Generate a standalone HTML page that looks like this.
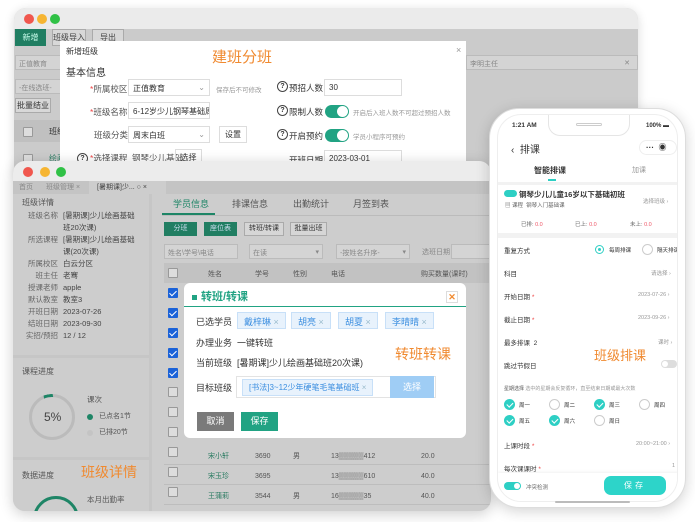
<!DOCTYPE html><html><head><meta charset="utf-8"><style>
*{box-sizing:border-box;margin:0;padding:0}
body{width:695px;height:522px;background:#fff;position:relative;overflow:hidden;font-family:"Liberation Sans","Noto Sans CJK SC",sans-serif;font-size:8px;color:#333}
.a{position:absolute}
.dot{position:absolute;width:10px;height:10px;border-radius:50%}
.r{background:#f0574e}.y{background:#f6b532}.g{background:#30c146}
.t{position:absolute;white-space:nowrap}
.inp{position:absolute;border:1px solid #ddd;background:#fff;height:17px;font-size:8px;padding:3px 4px;white-space:nowrap;overflow:hidden}
.gin{position:absolute;border:1px solid #bbb;background:#d4d4d4;height:15px;font-size:7px;color:#888;padding:3px;white-space:nowrap}
.tog{position:absolute;width:24px;height:13px;border-radius:7px;background:#21a383}
.tog:after{content:"";position:absolute;right:1px;top:1px;width:11px;height:11px;border-radius:50%;background:#fff}
.q{position:absolute;width:11px;height:11px;border:1.3px solid #444;border-radius:50%;font-size:7px;text-align:center;line-height:9px;font-weight:bold}
.cb{position:absolute;width:10px;height:10px;border:1px solid #999;background:#ddd;border-radius:1px}
.cbc{background:#1b62d8;border-color:#1b62d8}
.cbc:after{content:"";position:absolute;left:2px;top:0px;width:3px;height:6px;border:solid #fff;border-width:0 1.5px 1.5px 0;transform:rotate(45deg)}
.tag{position:absolute;background:#e8f2fc;border:1px solid #c8e0f8;color:#3d8fe0;height:17px;font-size:9px;padding:2px 6px;white-space:nowrap}
.pc{position:absolute;width:11px;height:11px;border-radius:50%;background:#2dcfc4}
.pc:after{content:"";position:absolute;left:3.5px;top:1.5px;width:2.5px;height:5px;border:solid #fff;border-width:0 1.2px 1.2px 0;transform:rotate(45deg)}
.po{position:absolute;width:11px;height:11px;border-radius:50%;border:1px solid #ccc;background:#fff}
</style></head><body>

<!-- Window 1 -->
<div class="a" style="left:14px;top:8px;width:624px;height:170px;border-radius:12px;background:#cbcbcb;overflow:hidden;box-shadow:0 2px 10px rgba(0,0,0,.15)">
 <div class="a" style="left:0;top:0;width:100%;height:21px;background:#ebebeb"></div>
 <div class="dot r" style="left:10px;top:6px"></div><div class="dot y" style="left:23px;top:6px"></div><div class="dot g" style="left:36px;top:6px"></div>
 <div class="a" style="left:1px;top:21px;width:31px;height:17px;background:#207e62;color:#cfe;font-size:8px;text-align:center;line-height:17px">新增</div>
 <div class="a" style="left:38px;top:21px;width:34px;height:17px;border:1px solid #aaa;background:#d8d8d8;font-size:8px;text-align:center;line-height:15px;color:#444">班级导入</div>
 <div class="a" style="left:78px;top:21px;width:32px;height:17px;border:1px solid #aaa;background:#d8d8d8;font-size:8px;text-align:center;line-height:15px;color:#444">导出</div>
 <div class="gin" style="left:1px;top:47px;width:48px">正值教育</div>
 <div class="gin" style="left:1px;top:71px;width:48px">-在线选班-</div>
 <div class="a" style="left:1px;top:90px;width:36px;height:15px;border:1px solid #aaa;background:#d8d8d8;font-size:8px;text-align:center;line-height:13px">批量结业</div>
 <div class="a" style="left:0;top:112px;width:50px;height:22px;background:#c0c0c0"></div>
 <div class="cb" style="left:9px;top:119px"></div><div class="t" style="left:35px;top:118px;font-size:8px">班级名</div>
 <div class="cb" style="left:9px;top:146px"></div><div class="t" style="left:35px;top:145px;font-size:8px;color:#287a60">绘画初</div>
 <div class="gin" style="left:452px;top:47px;width:172px">李明主任<span style="float:right;margin-right:4px">✕</span></div>
</div>
<!-- modal 1 -->
<div class="a" style="left:60px;top:41px;width:406px;height:130px;background:#fff">
 <div class="t" style="left:6px;top:5px;font-size:8px">新增班级</div>
 <div class="t" style="left:152px;top:5px;font-size:15px;color:#f08a30">建班分班</div>
 <div class="t" style="left:396px;top:4px;font-size:9px;color:#999">×</div>
 <div class="t" style="left:6px;top:23px;font-size:10px">基本信息</div>
 <div class="t" style="left:30px;top:42px;font-size:8.5px;color:#555"><span style="color:#e44">*</span>所属校区</div>
 <div class="inp" style="left:68px;top:38px;width:82px">正值教育<span style="float:right;color:#999">⌄</span></div>
 <div class="t" style="left:156px;top:43px;font-size:6.5px;color:#999">保存后不可修改</div>
 <div class="t" style="left:30px;top:65px;font-size:8.5px;color:#555"><span style="color:#e44">*</span>班级名称</div>
 <div class="inp" style="left:68px;top:61px;width:82px">6-12岁少儿钢琴基础周末班</div>
 <div class="t" style="left:34px;top:88px;font-size:8.5px;color:#555">班级分类</div>
 <div class="inp" style="left:68px;top:85px;width:82px">周末白班<span style="float:right;color:#999">⌄</span></div>
 <div class="a" style="left:159px;top:85px;width:28px;height:17px;border:1px solid #ddd;font-size:8px;text-align:center;line-height:15px">设置</div>
 <div class="q" style="left:17px;top:112px">?</div>
 <div class="t" style="left:30px;top:111px;font-size:8.5px;color:#555"><span style="color:#e44">*</span>选择课程 &nbsp;钢琴少儿基础</div>
 <div class="a" style="left:115px;top:108px;width:27px;height:17px;border:1px solid #ddd;font-size:8px;text-align:center;line-height:15px">选择</div>
 <div class="q" style="left:217px;top:40px">?</div><div class="t" style="left:229px;top:41px;font-size:8.5px">预招人数</div>
 <div class="inp" style="left:264px;top:38px;width:78px">30</div>
 <div class="q" style="left:217px;top:64px">?</div><div class="t" style="left:229px;top:65px;font-size:8.5px">限制人数</div>
 <div class="tog" style="left:265px;top:64px"></div>
 <div class="t" style="left:293px;top:66px;font-size:6.5px;color:#999">开启后入班人数不可超过预招人数</div>
 <div class="q" style="left:217px;top:88px">?</div><div class="t" style="left:229px;top:89px;font-size:8.5px">开启预约</div>
 <div class="tog" style="left:265px;top:88px"></div>
 <div class="t" style="left:293px;top:90px;font-size:6.5px;color:#999">学员小程序可预约</div>
 <div class="t" style="left:229px;top:113px;font-size:8.5px">开班日期</div>
 <div class="inp" style="left:264px;top:109px;width:78px">2023-03-01</div>
</div>

<!-- Window 2 -->
<div class="a" style="left:13px;top:161px;width:478px;height:350px;border-radius:12px;background:#cdcdcd;overflow:hidden;box-shadow:0 3px 14px rgba(0,0,0,.2)">
 <div class="a" style="left:0;top:0;width:100%;height:20px;background:#ececec"></div>
 <div class="dot r" style="left:10px;top:6px"></div><div class="dot y" style="left:27px;top:6px"></div><div class="dot g" style="left:43px;top:6px"></div>
 <div class="a" style="left:0;top:20px;width:100%;height:13px;background:#c4c4c4"></div>
 <div class="t" style="left:6px;top:21px;font-size:7px;color:#888">首页</div>
 <div class="t" style="left:33px;top:21px;font-size:7px;color:#888">班级管理 ×</div>
 <div class="a" style="left:76px;top:20px;width:77px;height:13px;background:#cdcdcd"></div>
 <div class="t" style="left:84px;top:21px;font-size:7px;color:#444">[暑期课]少... ○ ×</div>
 <div class="a" style="left:0;top:33px;width:139px;height:320px;background:#cdcdcd;border-right:3px solid #c6c6c6"></div>
 <div class="t" style="left:9px;top:36px;font-size:8px;color:#555">班级详情</div>
 <div class="t" style="left:8px;top:49px;font-size:7.5px;line-height:12px;color:#666;text-align:right;width:37px">班级名称<br><br>所选课程<br><br>所属校区<br>班主任<br>授课老师<br>默认教室<br>开班日期<br>结班日期<br>实招/预招</div>
 <div class="t" style="left:50px;top:49px;font-size:7.5px;line-height:12px;color:#444">[暑期课]少儿绘画基础<br>班20次课)<br>[暑期课]少儿绘画基础<br>课(20次课)<br>白云分区<br>老骞<br>apple<br>教室3<br>2023-07-26<br>2023-09-30<br>12 / 12</div>
 <div class="a" style="left:0;top:194px;width:139px;height:3px;background:#c6c6c6"></div>
 <div class="t" style="left:9px;top:205px;font-size:8px;color:#555">课程进度</div>
 <div class="a" style="left:16px;top:233px;width:46px;height:46px;border-radius:50%;border:3px solid #bbb"></div>
 <div class="a" style="left:16px;top:233px;width:46px;height:46px;border-radius:50%;border:3px solid transparent;border-top-color:#1e8566;transform:rotate(-10deg);clip-path:polygon(40% 0,60% 0,60% 20%,40% 20%)"></div>
 <div class="t" style="left:31px;top:249px;font-size:12px;color:#444">5%</div>
 <div class="t" style="left:74px;top:233px;font-size:7.5px;color:#555">课次</div>
 <div class="a" style="left:74px;top:253px;width:6px;height:6px;border-radius:50%;background:#1e8566"></div>
 <div class="t" style="left:86px;top:250px;font-size:7px;color:#555">已点名1节</div>
 <div class="a" style="left:74px;top:269px;width:6px;height:6px;border-radius:50%;background:#c4c4c4"></div>
 <div class="t" style="left:86px;top:266px;font-size:7px;color:#555">已排20节</div>
 <div class="a" style="left:0;top:296px;width:139px;height:3px;background:#c6c6c6"></div>
 <div class="t" style="left:9px;top:309px;font-size:8px;color:#555">数据进度</div>
 <div class="t" style="left:68px;top:301px;font-size:14px;color:#f08a30">班级详情</div>
 <div class="t" style="left:74px;top:333px;font-size:7.5px;color:#555">本月出勤率</div>
 <div class="a" style="left:20px;top:335px;width:46px;height:46px;border-radius:50%;border:3px solid #1e8566"></div>
 <div class="t" style="left:160px;top:36px;font-size:9px;color:#1e8566">学员信息</div>
 <div class="a" style="left:149px;top:52px;width:53px;height:2px;background:#1e8566"></div>
 <div class="a" style="left:149px;top:54px;width:329px;height:1px;background:#bbb"></div>
 <div class="t" style="left:219px;top:36px;font-size:9px;color:#555">排课信息</div>
 <div class="t" style="left:280px;top:36px;font-size:9px;color:#555">出勤统计</div>
 <div class="t" style="left:340px;top:36px;font-size:9px;color:#555">月签到表</div>
 <div class="a" style="left:151px;top:61px;width:33px;height:14px;background:#217e62;color:#cde;font-size:7px;text-align:center;line-height:14px">分班</div>
 <div class="a" style="left:191px;top:61px;width:33px;height:14px;background:#217e62;color:#cde;font-size:7px;text-align:center;line-height:14px">座位表</div>
 <div class="a" style="left:231px;top:61px;width:40px;height:14px;border:1px solid #aaa;background:#d6d6d6;font-size:7px;text-align:center;line-height:12px">转班/转课</div>
 <div class="a" style="left:277px;top:61px;width:37px;height:14px;border:1px solid #aaa;background:#d6d6d6;font-size:7px;text-align:center;line-height:12px">批量出班</div>
 <div class="gin" style="left:151px;top:83px;width:74px">姓名\学号\电话</div>
 <div class="gin" style="left:236px;top:83px;width:74px">在读<span style="float:right">▾</span></div>
 <div class="gin" style="left:323px;top:83px;width:74px">-按姓名升序-<span style="float:right">▾</span></div>
 <div class="t" style="left:409px;top:86px;font-size:7px;color:#888">选班日期</div>
 <div class="gin" style="left:438px;top:83px;width:40px"></div>
 <div class="a" style="left:151px;top:102px;width:327px;height:20px;background:#c2c2c2"></div>
 <div class="cb" style="left:155px;top:107px"></div>
 <div class="t" style="left:195px;top:108px;font-size:7px;color:#555">姓名</div>
 <div class="t" style="left:242px;top:108px;font-size:7px;color:#555">学号</div>
 <div class="t" style="left:280px;top:108px;font-size:7px;color:#555">性别</div>
 <div class="t" style="left:318px;top:108px;font-size:7px;color:#555">电话</div>
 <div class="t" style="left:408px;top:108px;font-size:7px;color:#555">购买数量(课时)</div>
 <div class="cb cbc" style="left:155px;top:127px"></div>
 <div class="cb cbc" style="left:155px;top:147px"></div>
 <div class="cb cbc" style="left:155px;top:167px"></div>
 <div class="cb cbc" style="left:155px;top:187px"></div>
 <div class="cb cbc" style="left:155px;top:207px"></div>
 <div class="cb" style="left:155px;top:226px"></div>
 <div class="cb" style="left:155px;top:246px"></div>
 <div class="cb" style="left:155px;top:266px"></div>
 <div class="cb" style="left:155px;top:286px"></div>
 <div class="cb" style="left:155px;top:306px"></div>
 <div class="cb" style="left:155px;top:326px"></div>
 <div class="t" style="left:195px;top:286px;font-size:7px;color:#287a60;line-height:20px">宋小轩<br>宋玉珍<br>王蒲莉</div>
 <div class="t" style="left:242px;top:286px;font-size:7px;color:#555;line-height:20px">3690<br>3695<br>3544</div>
 <div class="t" style="left:280px;top:286px;font-size:7px;color:#555;line-height:20px">男<br><br>男</div>
 <div class="t" style="left:318px;top:286px;font-size:7px;color:#555;line-height:20px">13▒▒▒▒▒412<br>13▒▒▒▒▒610<br>16▒▒▒▒▒35</div>
 <div class="t" style="left:408px;top:286px;font-size:7px;color:#555;line-height:20px">20.0<br>40.0<br>40.0</div>
 <div class="a" style="left:151px;top:303px;width:327px;height:1px;background:#bdbdbd"></div>
 <div class="a" style="left:151px;top:323px;width:327px;height:1px;background:#bdbdbd"></div>
 <div class="a" style="left:151px;top:343px;width:327px;height:1px;background:#bdbdbd"></div>
</div>
<!-- modal 2 -->
<div class="a" style="left:184px;top:283px;width:282px;height:155px;background:#fff;border-radius:6px">
 <div class="a" style="left:8px;top:12px;width:5px;height:5px;background:#21a383"></div>
 <div class="t" style="left:17px;top:5px;font-size:11px;color:#21a383;font-weight:bold">转班/转课</div>
 <div class="a" style="left:262px;top:8px;width:12px;height:12px;border:1px solid #ddd;color:#f08a30;font-size:9px;text-align:center;line-height:10px;font-weight:bold">✕</div>
 <div class="a" style="left:0;top:23px;width:282px;height:1px;background:#21a383"></div>
 <div class="t" style="left:12px;top:32px;font-size:9px">已选学员</div>
 <div class="tag" style="left:53px;top:29px">戴梓琳 <span style="color:#9bc">×</span></div>
 <div class="tag" style="left:107px;top:29px">胡亮 <span style="color:#9bc">×</span></div>
 <div class="tag" style="left:154px;top:29px">胡夏 <span style="color:#9bc">×</span></div>
 <div class="tag" style="left:201px;top:29px">李晴晴 <span style="color:#9bc">×</span></div>
 <div class="t" style="left:12px;top:53px;font-size:9px">办理业务 &nbsp;一键转班</div>
 <div class="t" style="left:211px;top:61px;font-size:14px;color:#f08a30">转班转课</div>
 <div class="t" style="left:12px;top:73px;font-size:9px">当前班级 &nbsp;[暑期课]少儿绘画基础班20次课)</div>
 <div class="t" style="left:12px;top:98px;font-size:9px">目标班级</div>
 <div class="a" style="left:52px;top:93px;width:200px;height:22px;border:1px solid #e3e3e3"></div>
 <div class="tag" style="left:58px;top:96px;font-size:8px">[书法]3~12少年硬笔毛笔基础班 <span style="color:#9bc">×</span></div>
 <div class="a" style="left:206px;top:93px;width:44px;height:22px;background:#9fcdf5;color:#fff;font-size:9px;text-align:center;line-height:22px">选择</div>
 <div class="a" style="left:13px;top:129px;width:37px;height:19px;background:#7a7a7a;color:#fff;font-size:9px;text-align:center;line-height:19px">取消</div>
 <div class="a" style="left:57px;top:129px;width:37px;height:19px;background:#21a383;color:#fff;font-size:9px;text-align:center;line-height:19px">保存</div>
</div>

<!-- Phone -->
<div class="a" style="left:489px;top:108px;width:197px;height:400px;border-radius:30px;background:#fff;border:1px solid #ddd;box-shadow:0 3px 14px rgba(0,0,0,.18)">
 <div class="a" style="left:7px;top:5px;width:181px;height:388px;border-radius:24px;border:1px solid #eee;background:#fff;overflow:hidden">
  <div class="a" style="left:50px;top:-1px;width:82px;height:22px;border:1px solid #e5e5e5;border-top:none;border-radius:0 0 12px 12px;background:#fff"></div>
  <div class="a" style="left:78px;top:8px;width:26px;height:3px;border-radius:2px;border:1px solid #ccc"></div>
  <div class="t" style="left:14px;top:7px;font-size:6.5px;font-weight:bold">1:21 AM</div>
  <div class="t" style="left:148px;top:8px;font-size:6px;font-weight:bold">100% ▬</div>
  <div class="t" style="left:13px;top:26px;font-size:10px">‹ &nbsp;排课</div>
  <div class="a" style="left:141px;top:25px;width:38px;height:15px;border-radius:8px;border:1px solid #eee;font-size:8px;line-height:13px;padding-left:6px;font-weight:bold">··· &nbsp;◉</div>
  <div class="t" style="left:36px;top:50px;font-size:8px;font-weight:bold">智能排课</div>
  <div class="t" style="left:134px;top:50px;font-size:7px;color:#999">加课</div>
  <div class="a" style="left:50px;top:64px;width:8px;height:2px;background:#2dcfc4"></div>
  <div class="a" style="left:0;top:67px;width:181px;height:3px;background:#f2f2f2"></div>
  <div class="a" style="left:6px;top:75px;width:13px;height:7px;border-radius:4px;background:#2dcfc4"></div>
  <div class="t" style="left:21px;top:74px;font-size:7.5px;font-weight:bold">钢琴少儿儿童16岁以下基础初班</div>
  <div class="t" style="left:145px;top:82px;font-size:5.5px;color:#999">选择班级 ›</div>
  <div class="t" style="left:7px;top:86px;font-size:5.5px;color:#666">▤ 课程 &nbsp;钢琴入门基础课</div>
  <div class="t" style="left:23px;top:105px;font-size:5.5px;color:#666">已排: <span style="color:#e56">0.0</span></div>
  <div class="t" style="left:77px;top:105px;font-size:5.5px;color:#666">已上: <span style="color:#e56">0.0</span></div>
  <div class="t" style="left:132px;top:105px;font-size:5.5px;color:#666">未上: <span style="color:#e56">0.0</span></div>
  <div class="a" style="left:0;top:118px;width:181px;height:5px;background:#f2f2f2"></div>
  <div class="t" style="left:6px;top:130px;font-size:6.5px">重复方式</div>
  <div class="a" style="left:97px;top:130px;width:9px;height:9px;border-radius:50%;border:1px solid #2dcfc4"><div class="a" style="left:2px;top:2px;width:3px;height:3px;border-radius:50%;background:#2dcfc4"></div></div>
  <div class="t" style="left:111px;top:131px;font-size:5.5px">每周排课</div>
  <div class="po" style="left:144px;top:129px"></div>
  <div class="t" style="left:159px;top:131px;font-size:5.5px">隔天排课</div>
  <div class="t" style="left:6px;top:153px;font-size:6.5px">科目</div><div class="t" style="left:153px;top:154px;font-size:5.5px;color:#999">请选择 ›</div>
  <div class="t" style="left:6px;top:176px;font-size:6.5px">开始日期 <span style="color:#e44">*</span></div><div class="t" style="left:140px;top:177px;font-size:5.5px;color:#999">2023-07-26 ›</div>
  <div class="t" style="left:6px;top:199px;font-size:6.5px">截止日期 <span style="color:#e44">*</span></div><div class="t" style="left:140px;top:200px;font-size:5.5px;color:#999">2023-09-26 ›</div>
  <div class="t" style="left:6px;top:222px;font-size:6.5px">最多排课 &nbsp;2</div><div class="t" style="left:160px;top:223px;font-size:5.5px;color:#999">课时 ›</div>
  <div class="t" style="left:96px;top:230px;font-size:13px;color:#f08a30">班级排课</div>
  <div class="t" style="left:6px;top:245px;font-size:6.5px">跳过节假日</div>
  <div class="a" style="left:163px;top:245px;width:16px;height:8px;border-radius:4px;background:#ddd"><div class="a" style="left:1px;top:1px;width:6px;height:6px;border-radius:50%;background:#fff"></div></div>
  <div class="t" style="left:6px;top:270px;font-size:5px;color:#555">星期选择 <span style="color:#999">选中的星期会反复循环，直至结束日期或最大次数</span></div>
  <div class="pc" style="left:6px;top:284px"></div><div class="t" style="left:21px;top:286px;font-size:5.5px">周一</div>
  <div class="po" style="left:51px;top:284px"></div><div class="t" style="left:66px;top:286px;font-size:5.5px">周二</div>
  <div class="pc" style="left:96px;top:284px"></div><div class="t" style="left:111px;top:286px;font-size:5.5px">周三</div>
  <div class="po" style="left:141px;top:284px"></div><div class="t" style="left:156px;top:286px;font-size:5.5px">周四</div>
  <div class="pc" style="left:6px;top:300px"></div><div class="t" style="left:21px;top:302px;font-size:5.5px">周五</div>
  <div class="pc" style="left:51px;top:300px"></div><div class="t" style="left:66px;top:302px;font-size:5.5px">周六</div>
  <div class="po" style="left:96px;top:300px"></div><div class="t" style="left:111px;top:302px;font-size:5.5px">周日</div>
  <div class="t" style="left:6px;top:325px;font-size:6.5px">上课时段 <span style="color:#e44">*</span></div><div class="t" style="left:138px;top:326px;font-size:5.5px;color:#999">20:00~21:00 ›</div>
  <div class="t" style="left:6px;top:348px;font-size:6.5px">每次课课时 <span style="color:#e44">*</span></div><div class="t" style="left:174px;top:348px;font-size:5.5px;color:#999">1</div>
  <div class="a" style="left:0;top:358px;width:181px;height:30px;background:#fff;box-shadow:0 -1px 3px rgba(0,0,0,.06)"></div>
  <div class="a" style="left:6px;top:367px;width:17px;height:8px;border-radius:4px;background:#2dcfc4"><div class="a" style="right:1px;top:1px;width:6px;height:6px;border-radius:50%;background:#fff"></div></div>
  <div class="t" style="left:28px;top:368px;font-size:5.5px;color:#666">冲突检测</div>
  <div class="a" style="left:106px;top:361px;width:62px;height:19px;border-radius:7px;background:#2dd4c9;color:#fff;font-size:8px;text-align:center;line-height:19px;letter-spacing:3px">保存</div>
 </div>
 <div class="a" style="left:65px;top:392px;width:75px;height:2px;border-radius:1px;background:#bbb"></div>
</div>
</body></html>
